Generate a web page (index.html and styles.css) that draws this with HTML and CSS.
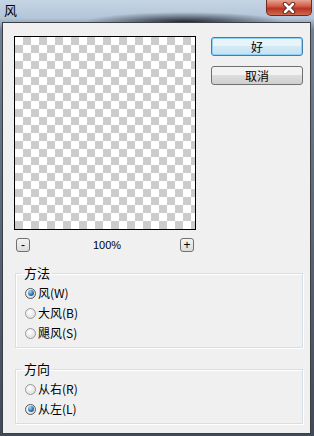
FILE: index.html
```html
<!DOCTYPE html>
<html lang="zh">
  <head>
    <meta charset="UTF-8" />
    <meta name="viewport" content="width=device-width, initial-scale=1.0" />
    <title>风</title>
    <link rel="stylesheet" href="styles.css">
  </head>
  <body>
    <div class="window">
      <div class="titlebar">
        <span class="title">风</span>
        <button type="button" class="close">
          <svg viewBox="0 0 16 12">
            <path d="M4 2 12 10M12 2 4 10" stroke="#5a2020" stroke-width="4.5" stroke-linecap="round" />
            <path d="M4 2 12 10M12 2 4 10" stroke="#fff" stroke-width="2.5" stroke-linecap="round" />
          </svg>
        </button>
      </div>

      <div class="client">
        <div class="top">
          <div class="preview-col">
            <div class="preview"></div>
            <div class="zoom-row">
              <button type="button" class="mini">-</button>
              <span class="zoom-value">100%</span>
              <button type="button" class="mini">+</button>
            </div>
          </div>
          <div class="actions">
            <button type="button" class="btn default">好</button>
            <button type="button" class="btn">取消</button>
          </div>
        </div>

        <fieldset class="group">
          <legend>方法</legend>
          <label class="radio"><span class="dot checked"></span>风(W)</label>
          <label class="radio"><span class="dot"></span>大风(B)</label>
          <label class="radio"><span class="dot"></span>飓风(S)</label>
        </fieldset>

        <fieldset class="group">
          <legend>方向</legend>
          <label class="radio"><span class="dot"></span>从右(R)</label>
          <label class="radio"><span class="dot checked"></span>从左(L)</label>
        </fieldset>
      </div>
    </div>
  </body>
</html>
```

FILE: styles.css
```css
body {
  margin: 0;
  width: 314px;
  height: 436px;
  overflow: hidden;
  font-family: "Noto Sans CJK SC", "Liberation Sans", sans-serif;
  font-size: 12px;
  color: #000;
}

.window {
  height: 436px;
  display: flex;
  flex-direction: column;
  background:
    radial-gradient(ellipse 100px 10px at 185px 22px, rgba(20, 25, 35, 0.9), rgba(20, 25, 35, 0) 100%),
    linear-gradient(#c6d5e5, #b3c5d8 18px, #6f8196 30px, #3f4b5a);
}

/* barra de titulo */
.titlebar {
  height: 22px;
  display: flex;
  justify-content: space-between;
  align-items: flex-start;
}

.title {
  padding: 3px 0 0 4px;
  line-height: 14px;
  font-size: 13px;
}

.close {
  width: 46px;
  height: 16px;
  margin-right: 2px;
  padding: 0;
  border: 1px solid #6b2a22;
  border-top: none;
  border-radius: 0 0 5px 5px;
  background: linear-gradient(#e8a493, #d0553f 45%, #b73222 55%, #cf6a4f);
  display: flex;
  justify-content: center;
  align-items: center;
}

.close svg {
  width: 16px;
  height: 12px;
}

/* cuerpo del dialogo */
.client {
  flex: 1;
  margin: 0 3px 2px 2px;
  padding: 13px 7px 0 11px;
  border: 1px solid #3c3f44;
  background: #f0f0f0;
}

.top {
  display: flex;
  gap: 15px;
}

.preview {
  width: 180px;
  height: 192px;
  border: 1px solid #000;
  background: repeating-conic-gradient(#cccccc 0 25%, #ffffff 0 50%) 0 0 / 16px 16px;
}

.zoom-row {
  display: flex;
  justify-content: space-between;
  align-items: center;
  margin-top: 8px;
  padding: 0 2px;
}

.zoom-value {
  font-family: "Liberation Sans", sans-serif;
  font-size: 11px;
  margin-left: 4px;
}

.mini {
  width: 14px;
  height: 14px;
  padding: 0;
  border: 1px solid #707070;
  border-radius: 3px;
  background: linear-gradient(#f4f4f4, #dcdcdc);
  font-family: "Liberation Sans", sans-serif;
  font-size: 12px;
  line-height: 11px;
  color: #000;
}

.actions {
  display: flex;
  flex-direction: column;
  gap: 10px;
  padding-top: 1px;
}

.btn {
  width: 92px;
  height: 19px;
  padding: 0;
  border: 1px solid #707070;
  border-radius: 3px;
  background: linear-gradient(#f2f2f2 50%, #dddddd 50%, #cfcfcf);
  font-family: "Noto Sans CJK SC", sans-serif;
  font-size: 12px;
  line-height: 16px;
  color: #000;
}

.btn.default {
  border-color: #3c7fb1;
  box-shadow: inset 0 0 0 1px #8ed3f5;
  background: linear-gradient(#e9f4fa 50%, #d3e9f4 50%, #c6e2f1);
}

/* grupos */
.group {
  margin: 14px 0 0 1px;
  padding: 3px 8px 4px 6px;
  border: 1px solid #d5dfe5;
  box-shadow: inset 1px 1px #fff, 1px 1px #fff;
}

.group legend {
  padding: 0 2px;
  line-height: 14px;
  font-size: 13px;
}

.radio {
  display: flex;
  align-items: center;
  height: 20px;
  margin-left: 3px;
  gap: 2px;
  line-height: 14px;
}

.dot {
  width: 9px;
  height: 9px;
  border: 1px solid #9a9a9a;
  border-radius: 50%;
  background: radial-gradient(circle at 40% 35%, #ffffff, #d6d6d6);
  display: flex;
  justify-content: center;
  align-items: center;
}

.dot.checked {
  border-color: #555;
}

.dot.checked::after {
  content: "";
  width: 6px;
  height: 6px;
  border-radius: 50%;
  background: radial-gradient(circle at 35% 30%, #9fd8ff, #1f6fb0 60%, #0d3c66);
}
```
